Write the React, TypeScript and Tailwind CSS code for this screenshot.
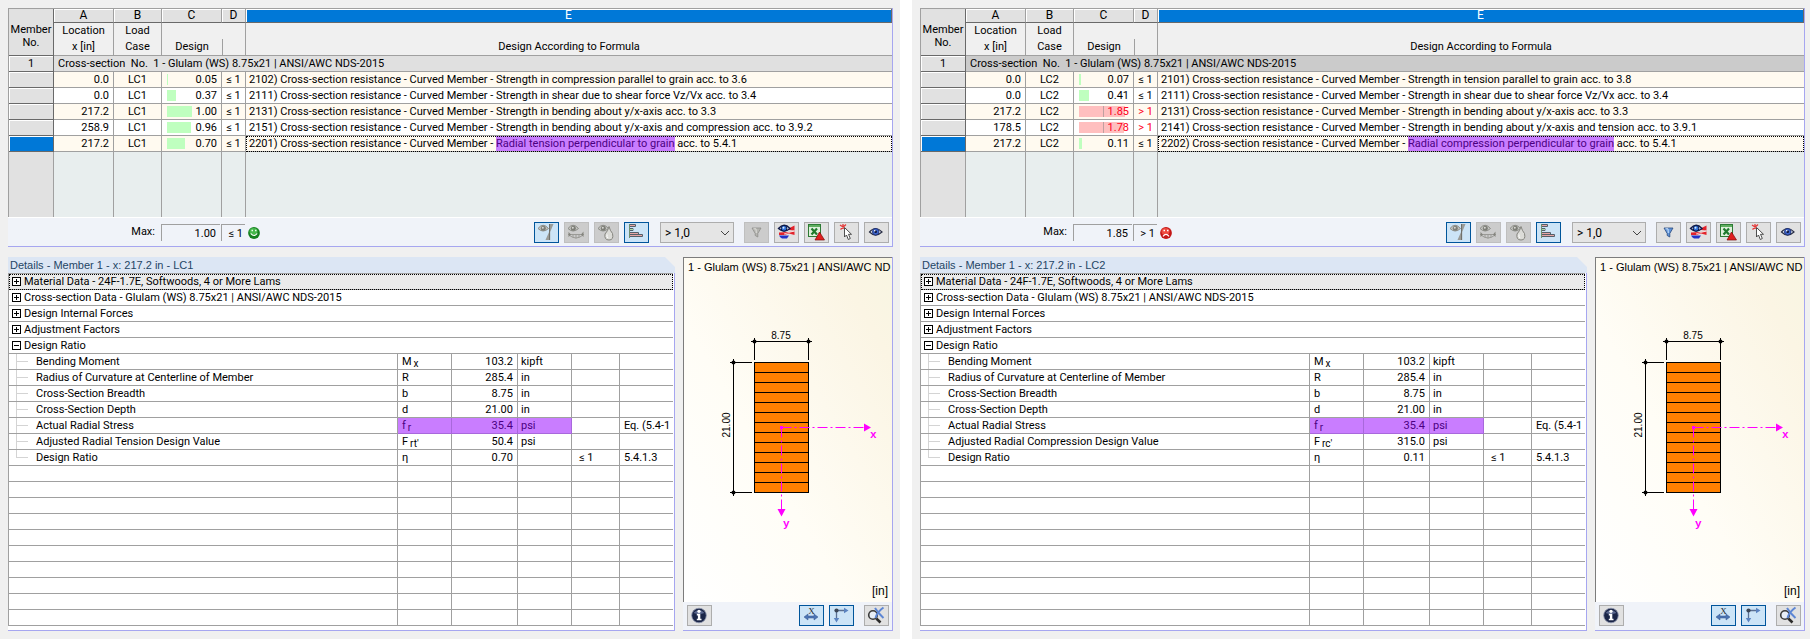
import React from "react";

type Row = {
  x: string;
  ratio: number;
  id: string;
  text: string;
  marked?: string;
  tail?: string;
};

type Detail = {
  name: string;
  symbol: string;
  sub?: string;
  value: string;
  unit: string;
  check?: string;
  ref?: string;
  marked?: boolean;
};

type Result = {
  id: string;
  loadCase: string;
  groupTone: string;
  max: number;
  filterable: boolean;
  rows: Row[];
  details: Detail[];
};

const PREFIX = "Cross-section resistance - Curved Member - ";
const SECTION = "Glulam (WS) 8.75x21 | ANSI/AWC NDS-2015";

const results: Result[] = [
  {
    id: "lc1",
    loadCase: "LC1",
    groupTone: "bg-[#e0e0e0]",
    max: 1,
    filterable: false,
    rows: [
      { x: "0.0", ratio: 0.05, id: "2102", text: "Strength in compression parallel to grain acc. to 3.6" },
      { x: "0.0", ratio: 0.37, id: "2111", text: "Strength in shear due to shear force Vz/Vx acc. to 3.4" },
      { x: "217.2", ratio: 1, id: "2131", text: "Strength in bending about y/x-axis acc. to 3.3" },
      { x: "258.9", ratio: 0.96, id: "2151", text: "Strength in bending about y/x-axis and compression acc. to 3.9.2" },
      { x: "217.2", ratio: 0.7, id: "2201", text: "", marked: "Radial tension perpendicular to grain", tail: " acc. to 5.4.1" },
    ],
    details: [
      { name: "Bending Moment", symbol: "M", sub: "x", value: "103.2", unit: "kipft" },
      { name: "Radius of Curvature at Centerline of Member", symbol: "R", value: "285.4", unit: "in" },
      { name: "Cross-Section Breadth", symbol: "b", value: "8.75", unit: "in" },
      { name: "Cross-Section Depth", symbol: "d", value: "21.00", unit: "in" },
      { name: "Actual Radial Stress", symbol: "f", sub: "r", value: "35.4", unit: "psi", ref: "Eq. (5.4-1", marked: true },
      { name: "Adjusted Radial Tension Design Value", symbol: "F", sub: "rt'", value: "50.4", unit: "psi" },
      { name: "Design Ratio", symbol: "η", value: "0.70", unit: "", check: "≤ 1", ref: "5.4.1.3" },
    ],
  },
  {
    id: "lc2",
    loadCase: "LC2",
    groupTone: "bg-[#cbcbcb]",
    max: 1.85,
    filterable: true,
    rows: [
      { x: "0.0", ratio: 0.07, id: "2101", text: "Strength in tension parallel to grain acc. to 3.8" },
      { x: "0.0", ratio: 0.41, id: "2111", text: "Strength in shear due to shear force Vz/Vx acc. to 3.4" },
      { x: "217.2", ratio: 1.85, id: "2131", text: "Strength in bending about y/x-axis acc. to 3.3" },
      { x: "178.5", ratio: 1.78, id: "2141", text: "Strength in bending about y/x-axis and tension acc. to 3.9.1" },
      { x: "217.2", ratio: 0.11, id: "2202", text: "", marked: "Radial compression perpendicular to grain", tail: " acc. to 5.4.1" },
    ],
    details: [
      { name: "Bending Moment", symbol: "M", sub: "x", value: "103.2", unit: "kipft" },
      { name: "Radius of Curvature at Centerline of Member", symbol: "R", value: "285.4", unit: "in" },
      { name: "Cross-Section Breadth", symbol: "b", value: "8.75", unit: "in" },
      { name: "Cross-Section Depth", symbol: "d", value: "21.00", unit: "in" },
      { name: "Actual Radial Stress", symbol: "f", sub: "r", value: "35.4", unit: "psi", ref: "Eq. (5.4-1", marked: true },
      { name: "Adjusted Radial Compression Design Value", symbol: "F", sub: "rc'", value: "315.0", unit: "psi" },
      { name: "Design Ratio", symbol: "η", value: "0.11", unit: "", check: "≤ 1", ref: "5.4.1.3" },
    ],
  },
];

/* ---------- icons ---------- */

function Icon({ children }: { children: React.ReactNode }) {
  return (
    <svg viewBox="0 0 23 19" className="block h-[19px] w-[23px]" aria-hidden="true">
      {children}
    </svg>
  );
}

function GrayEye() {
  return (
    <g>
      <path d="M3 5.500Q8 -1 13.500 5.500Q8 10.500 3 5.500Z" fill="#c4c5c1" stroke="#8c8d88" strokeWidth="1" />
      <circle cx="8.300" cy="5.300" r="2.500" fill="#7d7e77" />
      <circle cx="7.800" cy="4.700" r="1" fill="#d8d8d4" />
    </g>
  );
}

function StressIcon() {
  return (
    <Icon>
      <path d="M14.500 1H18.500L15.200 9V17H10.500L14.500 8Z" fill="#9a9b97" />
      <path d="M14.500 1V17" stroke="#6f706c" />
      <GrayEye />
    </Icon>
  );
}

function DeformIcon() {
  return (
    <Icon>
      <path d="M3 11.500H19M4 12Q11 18 18 12M8 12V14.500M11 11V15.500M14 12V14.500" fill="none" stroke="#9a9a96" />
      <path d="M3.500 9L6 11.500L3.500 14ZM18.500 8.500L16 11.500L18.500 14Z" fill="#85857f" />
      <GrayEye />
    </Icon>
  );
}

function DropIcon() {
  return (
    <Icon>
      <GrayEye />
      <path d="M14 3.500Q15 7.500 17.500 10.500Q19 17 14 17Q9 17 10 11Q13 8 14 3.500Z" fill="#dcdcd8" stroke="#85857f" />
      <path d="M12 11.500Q11.500 14 13 15" stroke="#fff" fill="none" />
    </Icon>
  );
}

function BarsIcon() {
  return (
    <Icon>
      <path d="M4 1.500H10.500V3.500H4M4 5.500H8V7.500H4M4 9.500H13.500V11.500M4 11.500H17.500V13.500H4" fill="none" stroke="#555f6a" />
      <path d="M5 2.500H10M5 10.500H13M5 12.500H17" stroke="#e7a6a6" />
      <path d="M5 6.500H8" stroke="#a9d8a2" />
      <path d="M4.500 1V15" stroke="#6d8f6e" />
    </Icon>
  );
}

function FunnelIcon({ active }: { active: boolean }) {
  return (
    <Icon>
      <path
        d="M7 5H16L12.800 10.500V14L10.200 12.500V10.500Z"
        fill={active ? "#5f93d8" : "#b4b4b0"}
        stroke={active ? "#27477c" : "#8e8e8a"}
        strokeWidth="0.800"
      />
      <path d="M8.500 5.800H11L11.300 10" fill="none" stroke={active ? "#cfe6ff" : "#e0e0dc"} />
    </Icon>
  );
}

function ResultsEyeIcon() {
  return (
    <Icon>
      <path d="M13.500 5.500L19.500 2.500V7.500L14 7Z" fill="#e3232b" />
      <path d="M4 9.500L13 9L19.500 8.500V12L14 10.500L9 12H4Z" fill="#e3232b" />
      <path d="M9 11L19 8" stroke="#fff" strokeWidth="0.700" />
      <path d="M4 12.500H14Q13 14 12 15.500H7Q5 14.500 4 12.500Z" fill="#2433c8" />
      <path d="M3.500 5.500Q9 -1 15 5.500Q9 10.500 3.500 5.500Z" fill="#f4f8ff" stroke="#101a4a" strokeWidth="1.400" />
      <circle cx="9" cy="5.300" r="2.900" fill="#2f6fd6" stroke="#0b1742" />
      <circle cx="8.500" cy="4.700" r="1" fill="#d9ecff" />
    </Icon>
  );
}

function ExcelIcon() {
  return (
    <Icon>
      <rect x="3.500" y="1.500" width="12" height="12" fill="#dff0dc" stroke="#2d7a35" />
      <path d="M4 2H15V4H4Z" fill="#5fae5f" />
      <path d="M6.500 5.500L12 11.500M12 5.500L6.500 11.500" stroke="#1f7a2c" strokeWidth="2.200" />
      <path d="M14.500 9L19.500 17H10Z" fill="#e02020" stroke="#7f0c0c" strokeWidth="0.700" />
    </Icon>
  );
}

function PickIcon() {
  return (
    <Icon>
      <path d="M5 2L11 6M11 1.500L5.500 6.500M8 1V6" stroke="#e53a3a" strokeWidth="1.300" />
      <path d="M9.500 4.500V14L11.500 12L13.300 16.500L15.300 15.500L13.500 11.300H16.500Z" fill="#fff" stroke="#3c3c3c" strokeWidth="0.900" />
    </Icon>
  );
}

function EyeIcon() {
  return (
    <Icon>
      <path d="M4.500 9Q10.500 2 17 9Q10.500 15 4.500 9Z" fill="#e9f0fb" stroke="#2a2f45" strokeWidth="1.200" />
      <circle cx="10.700" cy="8.800" r="3.300" fill="#3c63c8" stroke="#1a2b6e" strokeWidth="0.800" />
      <circle cx="10.700" cy="8.800" r="1.300" fill="#0c1236" />
      <circle cx="9.700" cy="7.800" r="0.800" fill="#fff" />
    </Icon>
  );
}

function InfoIcon() {
  return (
    <Icon>
      <circle cx="11" cy="9.500" r="7.300" fill="#1a2547" stroke="#8e96ad" strokeWidth="0.800" />
      <path d="M5.500 7Q11 1 16.500 7Q11 9 5.500 7Z" fill="#5b688f" />
      <circle cx="11" cy="5.300" r="1.600" fill="#fff" />
      <path d="M8.800 7.800H12.300V12.700H13.500V14.300H8.800V12.700H9.900V9.400H8.800Z" fill="#fff" />
    </Icon>
  );
}

function DimensionIcon() {
  return (
    <Icon>
      <text x="11.500" y="7.500" textAnchor="middle" fontSize="9" fontFamily="Liberation Serif, serif" fill="#22262e">
        X
      </text>
      <path d="M4 11L8 8V10H14V8L18 11L14 14V12H8V14Z" fill="#4c74b4" stroke="#35578f" strokeWidth="0.500" />
    </Icon>
  );
}

function AxesIcon() {
  return (
    <Icon>
      <path d="M6.500 14V4.500H16" fill="none" stroke="#5a6f92" strokeWidth="1.300" />
      <circle cx="6.500" cy="4.500" r="2.100" fill="#3c4656" />
      <path d="M14 1.800L18.500 4.500L14 7.200Z" fill="#5b83c0" />
      <path d="M3.800 12L6.500 16.500L9.200 12Z" fill="#5b83c0" />
    </Icon>
  );
}

function ZoomResetIcon() {
  return (
    <Icon>
      <circle cx="8" cy="9" r="4.300" fill="#e8eef7" stroke="#3a3a3a" strokeWidth="1.600" />
      <path d="M11.300 12.500L15.500 16.500" stroke="#2a2a2a" strokeWidth="2.600" />
      <path d="M10 2Q13 7 18.500 12M18.500 1.500Q12 6 10.500 12" fill="none" stroke="#5d86d4" strokeWidth="2" />
    </Icon>
  );
}

function Face({ ok }: { ok: boolean }) {
  return (
    <svg viewBox="0 0 12 12" className="block h-3 w-3" role="img" aria-label={ok ? "Passed" : "Failed"}>
      <circle cx="6" cy="6" r="5.900" fill={ok ? "#15801f" : "#c41616"} />
      <ellipse cx="5.500" cy="4.500" rx="4" ry="3.500" fill={ok ? "#46b84c" : "#ee4a3f"} />
      <path d="M3.500 3.500H5M7 3.500H8.500" stroke={ok ? "#eaffea" : "#fff"} strokeWidth="1.400" />
      <path
        d={ok ? "M2.800 6.500Q6 10.500 9.200 6.500" : "M3 9.300Q6 5.500 9 9.300"}
        fill="none"
        stroke="#fff"
        strokeWidth="1.200"
      />
    </svg>
  );
}

/* ---------- controls ---------- */

function ToolButton({
  label,
  tone = "plain",
  children,
}: {
  label: string;
  tone?: "plain" | "on" | "off";
  children: React.ReactNode;
}) {
  const look =
    tone === "on"
      ? "border-[#00559b] bg-[#cce4f7]"
      : tone === "off"
        ? "border-[#bfbfbf] bg-[#cccccc]"
        : "border-[#adadad] bg-[#e1e1e1]";
  return (
    <button
      type="button"
      aria-label={label}
      aria-pressed={tone === "on" ? true : undefined}
      disabled={tone === "off"}
      className={`h-[21px] w-[25px] shrink-0 border ${look}`}
    >
      {children}
    </button>
  );
}

function RatioCell({ ratio }: { ratio: number }) {
  const over = ratio > 1;
  return (
    <td className="relative border-r border-b border-[#a0a0a0] pr-1 text-right">
      <span
        className={`absolute top-0.5 left-[5px] h-[11px] ${over ? "bg-[#ffbfbf]" : "bg-[#bfffbf]"}`}
        style={{ width: Math.max(1, Math.round(ratio * 25)) }}
      >
        {over && <span className="absolute left-6 h-full w-px bg-[#c0a0a0]" />}
      </span>
      <span className={`relative ${over ? "text-[#ff0022]" : ""}`}>{ratio.toFixed(2)}</span>
    </td>
  );
}

const letterCell =
  "h-[14px] border-r border-b border-r-[#a0a0a0] border-b-[#696969] bg-[#e1e1e1] text-center text-xs leading-[13px] font-normal shadow-[inset_1px_1px_0_#fff]";

function ResultsTable({ result }: { result: Result }) {
  return (
    <table className="w-full table-fixed border-separate border-spacing-0 border-t border-l border-[#a0a0a0] leading-[15px] whitespace-nowrap">
      <colgroup>
        <col className="w-[45px]" />
        <col className="w-[60px]" />
        <col className="w-12" />
        <col className="w-[60px]" />
        <col className="w-6" />
        <col />
      </colgroup>
      <thead>
        <tr>
          <th rowSpan={2} className="border-r border-b border-[#696969] bg-[#e1e1e1] pt-2 text-center leading-[13px] font-normal">
            Member
            <br />
            No.
          </th>
          <th className={letterCell}>A</th>
          <th className={letterCell}>B</th>
          <th className={letterCell}>C</th>
          <th className={letterCell}>D</th>
          <th className="h-[14px] border-r border-b border-r-[#696969] border-b-[#696969] bg-[#0078d7] text-center text-xs leading-[13px] font-normal text-white shadow-[inset_1px_1px_0_#fff]">
            E
          </th>
        </tr>
        <tr className="h-[33px] align-bottom leading-4">
          <th className="border-r border-b border-[#a0a0a0] font-normal">
            Location
            <br />x [in]
          </th>
          <th className="border-r border-b border-[#a0a0a0] font-normal">
            Load
            <br />
            Case
          </th>
          <th className="border-b border-[#a0a0a0] font-normal">Design</th>
          <th className="border-r border-b border-[#a0a0a0] font-normal">
            <div className="h-4 border-l border-[#a0a0a0]" />
          </th>
          <th className="border-b border-[#a0a0a0] font-normal">Design According to Formula</th>
        </tr>
      </thead>
      <tbody>
        <tr className={`h-4 ${result.groupTone}`}>
          <th className="border-r border-b border-[#696969] bg-[#e1e1e1] font-normal shadow-[inset_1px_1px_0_#fff]">1</th>
          <td colSpan={5} className="border-b border-[#a0a0a0] pl-1">
            Cross-section&nbsp; No. &nbsp;1 - {SECTION}
          </td>
        </tr>
        {result.rows.map((row, i) => {
          const last = i === result.rows.length - 1;
          const over = row.ratio > 1;
          return (
            <tr key={row.id} className={`h-4 ${i % 2 === 0 ? "bg-[#fffaf0]" : "bg-white"}`}>
              <th
                aria-label={`Row ${i + 1}`}
                className={`border-r border-b border-[#696969] shadow-[inset_1px_1px_0_#fff] ${last ? "bg-[#0078d7]" : "bg-[#e1e1e1]"}`}
              />
              <td className="border-r border-b border-[#a0a0a0] pr-1 text-right">{row.x}</td>
              <td className="border-r border-b border-[#a0a0a0] text-center">{result.loadCase}</td>
              <RatioCell ratio={row.ratio} />
              <td className={`border-r border-b border-[#a0a0a0] text-center ${over ? "text-[#ff0022]" : ""}`}>
                {over ? "> 1" : "≤ 1"}
              </td>
              <td className={`border-b border-[#a0a0a0] pl-[3px] ${last ? "outline-1 -outline-offset-1 outline-black outline-dotted" : ""}`}>
                {row.id}) {PREFIX}
                {row.text}
                {row.marked && <mark className="bg-[#c97dff] py-px text-[#4b0082]">{row.marked}</mark>}
                {row.tail}
              </td>
            </tr>
          );
        })}
        <tr className="h-[65px] bg-[#e8eeee]">
          <td className="border-r border-[#a0a0a0] bg-[#e1e1e1]" />
          <td className="border-r border-[#a0a0a0]" />
          <td className="border-r border-[#a0a0a0]" />
          <td className="border-r border-[#a0a0a0]" />
          <td className="border-r border-[#a0a0a0]" />
          <td />
        </tr>
      </tbody>
    </table>
  );
}

function ResultsBar({ result }: { result: Result }) {
  const ok = result.max <= 1;
  return (
    <div className="flex h-[29px] items-center border-t border-white bg-[#f0f3f9] pt-px pr-[3px] pl-[104px]">
      <label htmlFor={`max-${result.id}`} className="w-[49px] pr-1.5 text-right">
        Max:
      </label>
      <input
        id={`max-${result.id}`}
        readOnly
        value={result.max.toFixed(2)}
        className="h-[17px] w-[59px] border-t border-l border-[#a0a0a0] pr-1 text-right"
      />
      <input
        aria-label="Limit"
        readOnly
        value={ok ? "≤ 1" : "> 1"}
        className="ml-px h-[17px] w-6 border-t border-l border-[#a0a0a0] pr-0.5 text-right"
      />
      <span className="ml-[3px]">
        <Face ok={ok} />
      </span>
      <div className="ml-auto flex items-center gap-[5px]">
        <ToolButton label="Show stresses" tone="on"><StressIcon /></ToolButton>
        <ToolButton label="Show deformations" tone="off"><DeformIcon /></ToolButton>
        <ToolButton label="Show fire design" tone="off"><DropIcon /></ToolButton>
        <ToolButton label="Show ratio bars" tone="on"><BarsIcon /></ToolButton>
        <div className="relative mr-[5px] ml-1.5 flex">
          <select
            aria-label="Ratio filter"
            className="h-[21px] w-[74px] appearance-none border border-[#adadad] bg-[#e5e5e5] pl-1 text-xs leading-4"
          >
            <option>&gt; 1,0</option>
          </select>
          <svg viewBox="0 0 10 6" className="pointer-events-none absolute top-2 right-1 h-1.5 w-2.5" aria-hidden="true">
            <path d="M1 1L5 5L9 1" fill="none" stroke="#444" />
          </svg>
        </div>
        <ToolButton label="Filter" tone={result.filterable ? "plain" : "off"}>
          <FunnelIcon active={result.filterable} />
        </ToolButton>
        <ToolButton label="Show results"><ResultsEyeIcon /></ToolButton>
        <ToolButton label="Export to spreadsheet"><ExcelIcon /></ToolButton>
        <ToolButton label="Pick member"><PickIcon /></ToolButton>
        <ToolButton label="View"><EyeIcon /></ToolButton>
      </div>
    </div>
  );
}

function Toggle({ open, label }: { open: boolean; label: string }) {
  return (
    <button type="button" aria-label={label} aria-expanded={open} className="block h-[9px] w-[9px] border border-black bg-white">
      <svg viewBox="0 0 7 7" className="block h-[7px] w-[7px]" aria-hidden="true">
        <path d={open ? "M1 3.500H6" : "M1 3.500H6M3.500 1V6"} stroke="#000" />
      </svg>
    </button>
  );
}

const groups = [
  "Material Data - 24F-1.7E, Softwoods, 4 or More Lams",
  `Cross-section Data - ${SECTION}`,
  "Design Internal Forces",
  "Adjustment Factors",
  "Design Ratio",
];

function Details({ result }: { result: Result }) {
  const line = "border-b border-[#a0a0a0]";
  const cell = "border-r border-b border-[#a0a0a0]";
  return (
    <section className="flex min-w-0 flex-1 flex-col">
      <h2 className="h-4 bg-[#dce6f4] pl-0.5 font-['Liberation_Sans',Arial,sans-serif] leading-[17px] text-[#1f4565] [clip-path:polygon(0_0,calc(100%-10px)_0,100%_10px,100%_100%,0_100%)]">
        Details - Member 1 - x: 217.2 in - {result.loadCase}
      </h2>
      <div className="flex-1 border-r border-b border-[#a6a6f0] bg-white pr-px pb-[3px]">
        <table className="w-full table-fixed border-separate border-spacing-0 border-t border-l border-[#a0a0a0] leading-[15px] whitespace-nowrap">
          <colgroup>
            <col />
            <col className="w-[54px]" />
            <col className="w-[66px]" />
            <col className="w-[54px]" />
            <col className="w-12" />
            <col className="w-[53px]" />
          </colgroup>
          <tbody>
            {groups.map((name, i) => (
              <tr key={name} className="h-4">
                <td
                  colSpan={6}
                  className={`${line} pl-[3px] ${i === 0 ? "bg-[#ebebeb] outline-1 -outline-offset-1 outline-black outline-dotted" : ""}`}
                >
                  <div className="flex h-[15px] items-center gap-[3px]">
                    <Toggle open={i === groups.length - 1} label={name} />
                    <span>{name}</span>
                  </div>
                </td>
              </tr>
            ))}
            {result.details.map((d, i) => {
              const mark = d.marked ? "border-[#a868dc] bg-[#c97dff] text-[#4b0082]" : "";
              const last = i === result.details.length - 1;
              return (
                <tr key={d.name} className="h-4">
                  <td className={`${cell} pl-[7px]`}>
                    <div className="flex h-[15px] items-start">
                      <span className={`w-px bg-[#d4d4d4] ${last ? "h-2" : "h-[15px]"}`} />
                      <span className="mt-[7px] mr-2 h-px w-[11px] bg-[#d4d4d4]" />
                      <span>{d.name}</span>
                    </div>
                  </td>
                  <td className={`${cell} ${mark} pl-1`}>
                    {d.symbol}
                    {d.sub && <span className="relative top-0.5 ml-0.5 text-[10px] leading-none">{d.sub}</span>}
                  </td>
                  <td className={`${cell} ${mark} pr-1 text-right`}>{d.value}</td>
                  <td className={`${cell} ${mark} pl-[3px]`}>{d.unit}</td>
                  <td className={`${cell} pl-[7px]`}>{d.check}</td>
                  <td className={`${line} overflow-hidden pl-1`}>{d.ref}</td>
                </tr>
              );
            })}
            {Array.from({ length: 10 }, (_, i) => (
              <tr key={i} className="h-4">
                <td className={cell} />
                <td className={cell} />
                <td className={cell} />
                <td className={cell} />
                <td className={cell} />
                <td className={line} />
              </tr>
            ))}
          </tbody>
        </table>
      </div>
    </section>
  );
}

function SectionDrawing() {
  const layers = Array.from({ length: 12 }, (_, i) => 114.5 + i * 10);
  return (
    <svg viewBox="0 0 208 300" className="mx-auto block h-[300px] w-[208px]" role="img" aria-label="Cross-section 8.75 x 21.00 in">
      <g transform="translate(0 -18)">
        <rect x="70.500" y="104.500" width="54" height="130" fill="#ff8000" stroke="#000" />
        {layers.map((y) => (
          <path key={y} d={`M70 ${y}H125`} stroke="#000" />
        ))}
        <path d="M67 83.500H128M70.500 80V102M124.500 80V102M49.500 101V238M46 104.500H68M46 234.500H68" stroke="#000" />
        <circle cx="70.500" cy="83.500" r="2" />
        <circle cx="124.500" cy="83.500" r="2" />
        <circle cx="49.500" cy="104.500" r="2" />
        <circle cx="49.500" cy="234.500" r="2" />
        <text x="97" y="81" textAnchor="middle" fontSize="10">8.75</text>
        <text x="46" y="167" textAnchor="middle" fontSize="10" transform="rotate(-90 46 167)">21.00</text>
        <path d="M97.500 169.500H181M97.500 169.500V252" stroke="#ff00ff" strokeDasharray="10 3 2 3" />
        <rect x="96" y="168" width="3" height="3" fill="#ff00ff" />
        <path d="M180 165.500L187 169.500L180 173.500ZM93.500 251L97.500 258.500L101.500 251Z" fill="#ff00ff" />
        <text x="186" y="180" fontSize="11" fontWeight="bold" fontFamily="Liberation Mono, monospace" fill="#ff00ff">x</text>
        <text x="99" y="269" fontSize="11" fontWeight="bold" fontFamily="Liberation Mono, monospace" fill="#ff00ff">y</text>
      </g>
    </svg>
  );
}

function Preview() {
  return (
    <section className="flex w-[210px] shrink-0 flex-col border-r border-b border-[#a6a6f0]">
      <div className="flex flex-1 flex-col border-t border-l border-[#7c7c7c] bg-[linear-gradient(60deg,#ffffff_0%,#fffdf6_40%,#fbf5e4_85%,#f8f5e2_100%)] font-['Liberation_Sans',Arial,sans-serif]">
        <h2 className="h-[18px] pl-1 leading-[18px] whitespace-nowrap">1 - Glulam (WS) 8.75x21 | ANSI/AWC ND</h2>
        <SectionDrawing />
        <p className="mt-auto pr-1 pb-[3px] text-right text-xs">[in]</p>
      </div>
      <div className="flex h-7 items-start gap-[5px] bg-[#f0f3f9] pt-[3px] pr-[3px] pl-1">
        <ToolButton label="Information"><InfoIcon /></ToolButton>
        <span className="ml-auto" />
        <ToolButton label="Show dimensions" tone="on"><DimensionIcon /></ToolButton>
        <ToolButton label="Show axes" tone="on"><AxesIcon /></ToolButton>
        <span className="w-0" />
        <ToolButton label="Reset zoom"><ZoomResetIcon /></ToolButton>
      </div>
    </section>
  );
}

function ResultWindow({ result }: { result: Result }) {
  return (
    <div className={`flex min-w-0 flex-col gap-2.5 bg-[#f0f0f0] py-2 pl-2 ${result.filterable ? "pr-[5px]" : "pr-[7px]"}`}>
      <section className="border-r border-b border-[#a6a6f0]">
        <ResultsTable result={result} />
        <ResultsBar result={result} />
      </section>
      <div className="flex flex-1 gap-2">
        <Details result={result} />
        <Preview />
      </div>
    </div>
  );
}

export default function App() {
  return (
    <main className="grid min-h-screen grid-cols-[900fr_898fr] gap-x-3 bg-white font-[Roboto,'Liberation_Sans',sans-serif] text-[11px] text-black">
      {results.map((r) => (
        <ResultWindow key={r.id} result={r} />
      ))}
    </main>
  );
}
